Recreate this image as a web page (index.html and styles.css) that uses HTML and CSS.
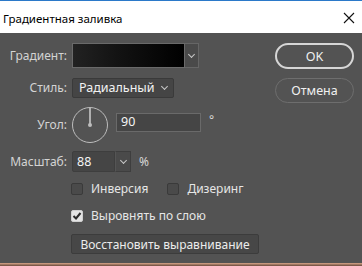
FILE: index.html
```html
<!DOCTYPE html>
<html lang="ru">
<head>
    <meta charset="UTF-8">
    <title>Градиентная заливка</title>
    <link rel="stylesheet" href="styles.css">
</head>
<body>
    <div class="dialog">
        <div class="titlebar">
            <span class="title">Градиентная заливка</span>
            <svg class="close" width="12" height="12" viewBox="0 0 12 12">
                <path d="M1 1 L11 11 M11 1 L1 11" stroke="#111" stroke-width="1.1" fill="none"/>
            </svg>
        </div>
        <div class="content">
            <div class="form">
                <div class="row row-gradient">
                    <label class="label">Градиент:</label>
                    <div class="swatch"></div>
                    <div class="drop drop-tall"><span class="chev"></span></div>
                </div>
                <div class="row row-style">
                    <label class="label">Стиль:</label>
                    <div class="select">
                        <span>Радиальный</span>
                        <span class="chev"></span>
                    </div>
                </div>
                <div class="row row-angle">
                    <label class="label">Угол:</label>
                    <svg class="dial" width="38" height="38" viewBox="0 0 38 38">
                        <circle cx="19" cy="19" r="17.5" stroke="#bdbdbd" stroke-width="1" fill="none"/>
                        <line x1="19" y1="2" x2="19" y2="19" stroke="#cfcfcf" stroke-width="1.5"/>
                        <circle cx="19" cy="19" r="2" fill="#bdbdbd"/>
                    </svg>
                    <div class="field field-angle">90</div>
                    <span class="unit unit-deg">°</span>
                </div>
                <div class="row row-scale">
                    <label class="label">Масштаб:</label>
                    <div class="field field-scale">88</div>
                    <div class="drop drop-short"><span class="chev"></span></div>
                    <span class="unit">%</span>
                </div>
                <div class="row row-checks">
                    <span class="check"></span>
                    <span class="check-text">Инверсия</span>
                    <span class="check check-second"></span>
                    <span class="check-text">Дизеринг</span>
                </div>
                <div class="row row-align">
                    <span class="check checked">
                        <svg width="10" height="10" viewBox="0 0 10 10">
                            <path d="M1.5 5 L4 7.5 L8.5 2" stroke="#2a2a2a" stroke-width="2" fill="none"/>
                        </svg>
                    </span>
                    <span class="check-text">Выровнять по слою</span>
                </div>
                <div class="row row-reset">
                    <button class="reset">Восстановить выравнивание</button>
                </div>
            </div>
            <div class="actions">
                <button class="pill pill-ok">OK</button>
                <button class="pill pill-cancel">Отмена</button>
            </div>
        </div>
        <div class="strip"></div>
    </div>
</body>
</html>
```

FILE: styles.css
```css
body {
    margin: 0;
    background: #535353;
    font-family: "Noto Sans", "Open Sans", sans-serif;
    font-size: 12px;
}

.dialog {
    width: 362px;
    height: 266px;
    display: flex;
    flex-direction: column;
    overflow: hidden;
}

.titlebar {
    height: 32px;
    background: #fff;
    border-top: 1px solid #2b79c9;
    display: flex;
    align-items: center;
    justify-content: space-between;
    padding: 0 7px 0 3px;
    color: #000;
    font-size: 11.5px;
}

.title {
    margin-top: 2px;
}

.close {
    margin-top: 2px;
}

.content {
    flex: 1;
    background: #535353;
    display: flex;
    justify-content: space-between;
    padding: 10px 8px 0 5px;
    color: #dadada;
}

.form {
    display: flex;
    flex-direction: column;
}

.row {
    display: flex;
    align-items: center;
    line-height: 14px;
}

.label {
    width: 62px;
    margin-right: 5px;
    text-align: right;
    color: #d4d4d4;
}

.swatch {
    width: 111px;
    height: 23px;
    border: 1px solid #6a6a6a;
    background: linear-gradient(to right, #222 0%, #111 45%, #000 100%);
}

.drop {
    width: 13px;
    background: #4a4a4a;
    border: 1px solid #3e3e3e;
    border-left: none;
    display: flex;
    align-items: center;
    justify-content: center;
}

.drop-tall {
    height: 23px;
    border-color: #666;
}

.drop-short {
    height: 19px;
    width: 14px;
    border-left: 1px solid #555;
}

.chev {
    width: 4px;
    height: 4px;
    border-right: 1px solid #c8c8c8;
    border-bottom: 1px solid #c8c8c8;
    transform: rotate(45deg);
    margin-top: -3px;
}

.row-style {
    margin-top: 10px;
}

.select {
    width: 88px;
    height: 18px;
    padding: 0 6px 0 6px;
    background: #454545;
    border: 1px solid #3a3a3a;
    border-radius: 2px;
    display: flex;
    align-items: center;
    justify-content: space-between;
    color: #f2f2f2;
    font-size: 12.5px;
}

.row-angle {
    margin-top: 8px;
    height: 38px;
}

.dial {
    margin-left: -1px;
    margin-right: 7px;
}

.field {
    height: 17px;
    background: #454545;
    border: 1px solid #6a6a6a;
    color: #f4f4f4;
    padding: 0 4px;
    display: flex;
    align-items: center;
    font-size: 12.5px;
}

.field-angle {
    width: 75px;
    margin-top: -6px;
}

.unit {
    margin-left: 8px;
    color: #d8d8d8;
}

.unit-deg {
    margin-top: -10px;
}

.row-scale {
    margin-top: 7px;
    height: 21px;
}

.field-scale {
    width: 33px;
    height: 19px;
    border-color: #3e3e3e;
    border-radius: 2px 0 0 2px;
}

.row-checks {
    margin-top: 11px;
    padding-left: 66px;
    height: 12px;
}

.check {
    width: 10px;
    height: 10px;
    border: 1px solid #3a3a3a;
    background: #4a4a4a;
    border-radius: 2px;
    margin-right: 8px;
    display: flex;
    align-items: center;
    justify-content: center;
}

.check-second {
    margin-left: 19px;
}

.checked {
    background: #e4e4e4;
    border-color: #cfcfcf;
}

.check-text {
    color: #e6e6e6;
}

.row-align {
    margin-top: 15px;
    padding-left: 66px;
    height: 12px;
}

.row-reset {
    margin-top: 12px;
    padding-left: 66px;
    height: 20px;
}

.reset {
    width: 188px;
    height: 20px;
    background: #474747;
    border: 1px solid #3c3c3c;
    border-radius: 2px;
    color: #ececec;
    font-family: inherit;
    font-size: 12px;
    padding: 0;
}

.actions {
    display: flex;
    flex-direction: column;
    gap: 9px;
}

.pill {
    width: 79px;
    height: 26px;
    border-radius: 13px;
    background: #535353;
    color: #f0f0f0;
    font-family: inherit;
    font-size: 12.5px;
    padding: 0;
}

.pill-ok {
    border: 2px solid #d6d6d6;
}

.pill-cancel {
    height: 25px;
    border: 1px solid #6e6e6e;
}

.strip {
    height: 3px;
    background: linear-gradient(to bottom, #d8a68a, #6b4a3c);
}
```
